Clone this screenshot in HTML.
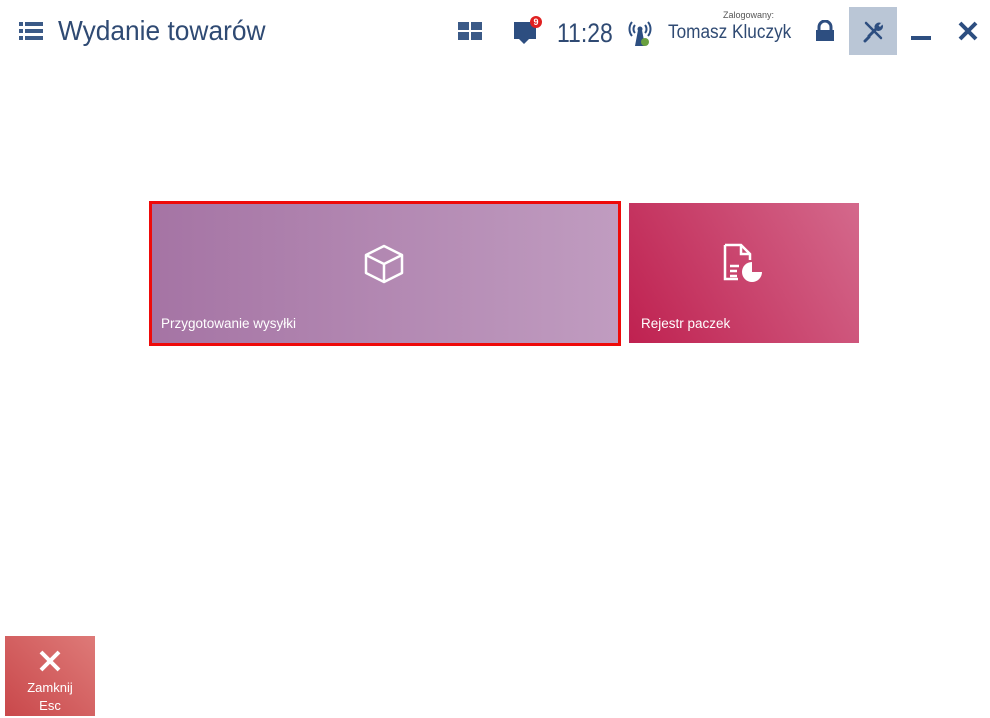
<!DOCTYPE html>
<html><head><meta charset="utf-8"><style>
*{margin:0;padding:0;box-sizing:border-box}
body{width:990px;height:718px;background:#fff;font-family:"Liberation Sans",sans-serif;position:relative;overflow:hidden;color:#2f4a73}
.a{position:absolute}
.s{transform-origin:0 0;white-space:nowrap}
</style></head><body>
<svg class="a" style="left:19px;top:22px" width="24" height="18"><g fill="#3b5a87"><rect x="0" y="0" width="4" height="4"/><rect x="6" y="0" width="18" height="4"/><rect x="0" y="7" width="4" height="4"/><rect x="6" y="7" width="18" height="4"/><rect x="0" y="14" width="4" height="4"/><rect x="6" y="14" width="18" height="4"/></g></svg>
<div class="a s" style="left:58px;top:15px;font-size:28px;color:#2f4a73;transform:scaleX(0.94)">Wydanie towarów</div>
<svg class="a" style="left:458px;top:22px" width="24" height="18"><g fill="#3b5a87"><rect x="0" y="0" width="11" height="8"/><rect x="13" y="0" width="11" height="8"/><rect x="0" y="10" width="11" height="8"/><rect x="13" y="10" width="11" height="8"/></g></svg>
<svg class="a" style="left:512px;top:15px" width="32" height="32"><path d="M2 7h22v17h-7l-5 5-5-5H2z" fill="#2d4e80"/><circle cx="24" cy="7" r="6" fill="#e02020"/><text x="24" y="10" font-size="9" fill="#fff" text-anchor="middle" font-family="Liberation Sans" font-weight="bold">9</text></svg>
<div class="a s" style="left:557px;top:18px;font-size:27px;color:#2f4a73;transform:scaleX(0.85)">11:28</div>
<svg class="a" style="left:626px;top:18px" width="28" height="30"><g fill="none" stroke="#2d4e80" stroke-width="2"><path d="M6 4a11 11 0 0 0 0 14M22 4a11 11 0 0 1 0 14M9 7a6 6 0 0 0 0 8M19 7a6 6 0 0 1 0 8"/></g><circle cx="14" cy="11" r="2.5" fill="#2d4e80"/><path d="M12 12h4l3 16h-10z" fill="#2d4e80"/><circle cx="19" cy="24" r="4" fill="#6aa040"/></svg>
<div class="a" style="left:723px;top:10px;font-size:9px;color:#555">Zalogowany:</div>
<div class="a s" style="left:668px;top:22px;font-size:19px;color:#2f4a73;transform:scaleX(0.905)">Tomasz Kluczyk</div>
<svg class="a" style="left:814px;top:20px" width="22" height="22"><path d="M5 10V7a6 6 0 0 1 12 0v3" fill="none" stroke="#2d4e80" stroke-width="3"/><rect x="2" y="10" width="18" height="11" fill="#2d4e80"/></svg>
<div class="a" style="left:849px;top:7px;width:48px;height:48px;background:#bac6d6"></div>
<svg class="a" style="left:861px;top:19px" width="24" height="24"><g stroke="#2d4e80" stroke-linecap="round" fill="none"><path d="M5 4l15 15" stroke-width="2.5"/><path d="M8 17l7-7" stroke-width="3"/><path d="M4 22l4-4" stroke-width="3"/></g><path d="M14 10a4.5 4.5 0 0 1 6-6l-2.5 2.5 1.5 1.5 2.5-2.5a4.5 4.5 0 0 1-6 6z" fill="#2d4e80"/></svg>
<div class="a" style="left:911px;top:36px;width:20px;height:4px;background:#2d4e80"></div>
<svg class="a" style="left:958px;top:21px" width="20" height="20"><path d="M2 2l16 16M18 2L2 18" stroke="#2d4e80" stroke-width="4"/></svg>

<div class="a" style="left:149px;top:201px;width:472px;height:145px;border:3px solid #ee0a0a;background:linear-gradient(90deg,#a574a4,#c09cc0)"></div>
<svg class="a" style="left:362px;top:243px" width="44" height="42"><g fill="none" stroke="#fff" stroke-width="2.5" stroke-linejoin="round"><path d="M22 3L40 12V30L22 39L4 30V12Z"/><path d="M4 12L22 21L40 12M22 21V39"/></g></svg>
<div class="a" style="left:161px;top:316px;font-size:13.5px;color:#fff">Przygotowanie wysyłki</div>

<div class="a" style="left:629px;top:203px;width:230px;height:140px;background:linear-gradient(60deg,#bf2150,#d4698c)"></div>
<svg class="a" style="left:722px;top:242px" width="44" height="44"><g fill="none" stroke="#fff" stroke-width="2.5"><path d="M3 3h16l9 9v6M3 3v34h13"/><path d="M19 3v9h9"/></g><g stroke="#fff" stroke-width="2.5"><path d="M8 24h9M8 29h7M8 34h7"/></g><path d="M30 20a10 10 0 1 0 10 10h-10z" fill="#fff"/></svg>
<div class="a" style="left:641px;top:316px;font-size:13.5px;color:#fff">Rejestr paczek</div>

<div class="a" style="left:5px;top:636px;width:90px;height:80px;background:linear-gradient(45deg,#c9484b,#de7a78)"></div>
<svg class="a" style="left:39px;top:650px" width="22" height="22"><path d="M2 2l18 18M20 2L2 20" stroke="#fff" stroke-width="4"/></svg>
<div class="a" style="left:5px;top:679px;width:90px;text-align:center;font-size:13px;color:#fff;line-height:18px">Zamknij<br>Esc</div>
</body></html>
